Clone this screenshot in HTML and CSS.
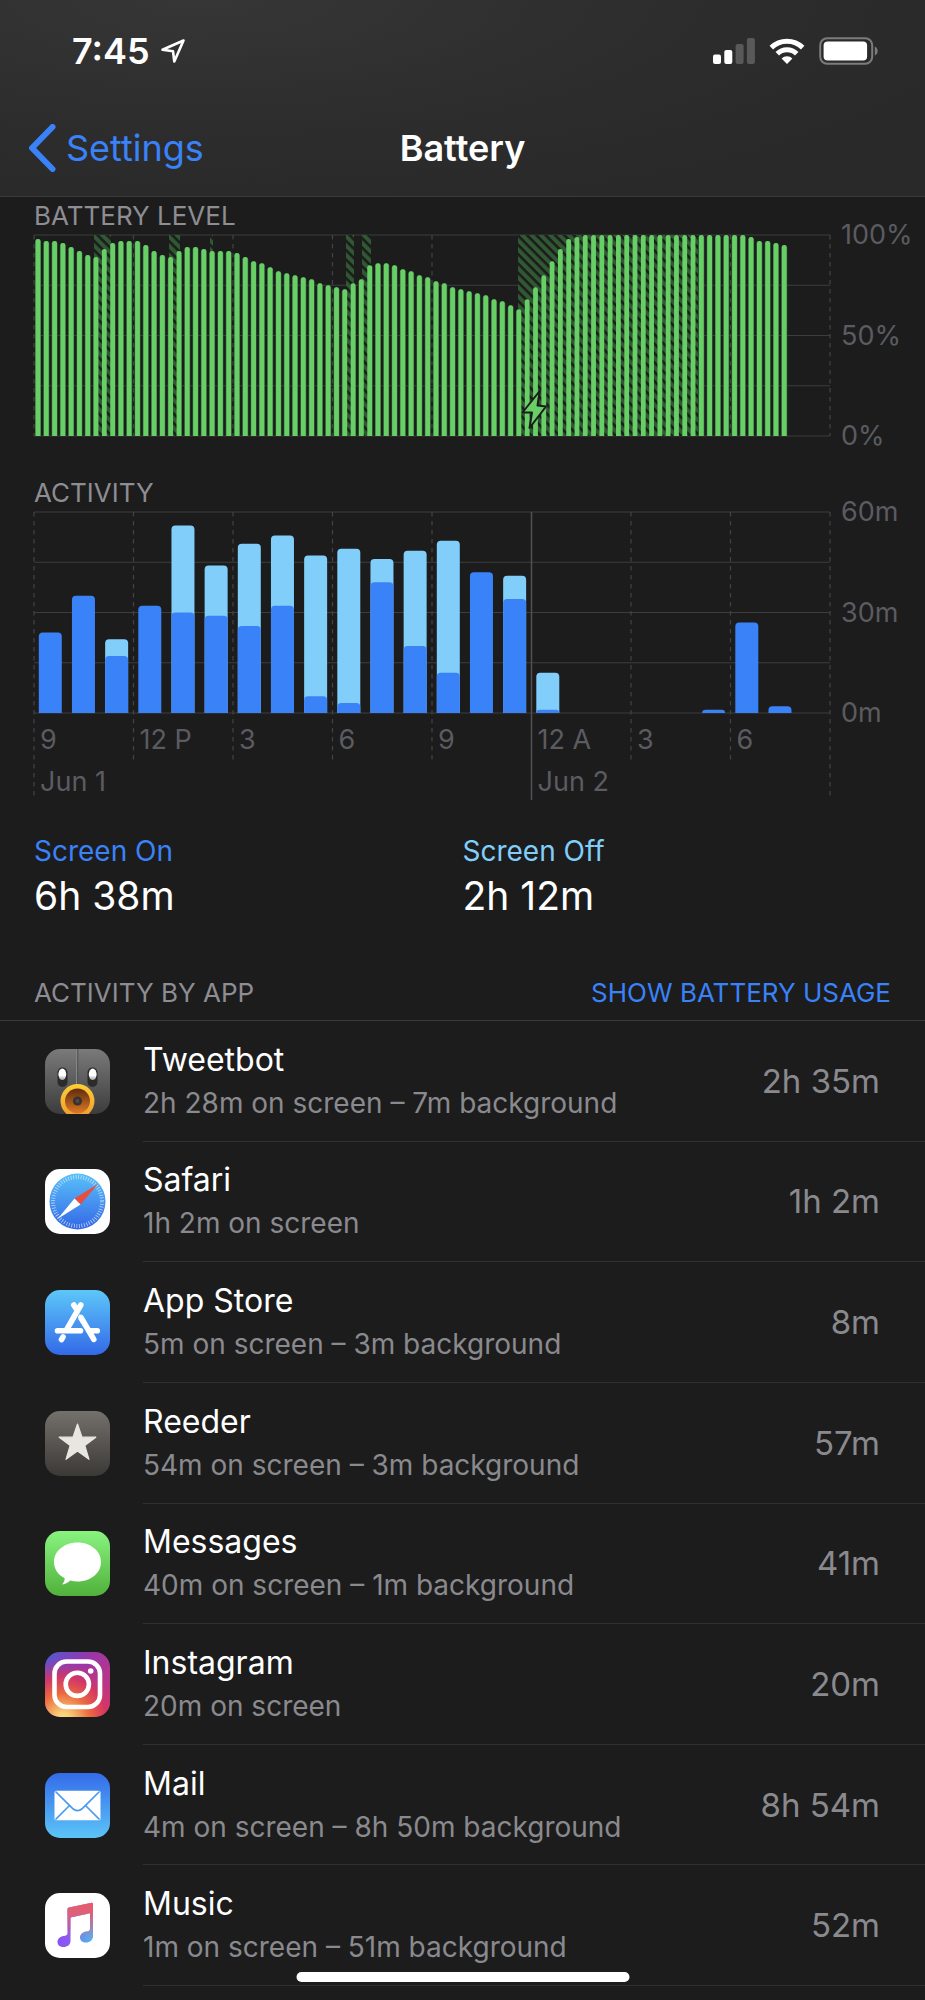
FILE: index.html
```html
<!DOCTYPE html>
<html lang="en">
<head>
<meta charset="utf-8">
<meta name="viewport" content="width=device-width, initial-scale=1">
<title>Battery</title>
<link rel="stylesheet" href="styles.css">
</head>
<body>
<header class="top">
  <div class="status">
    <div class="status-left">
      <span class="clock">7:45</span>
      <svg class="loc" viewBox="0 0 26 26" aria-hidden="true"><path d="M23.500 2.500 2.500 11.800 13 13.200 14.300 23.500Z" fill="none" stroke="#fff" stroke-width="2.600" stroke-linejoin="round"/></svg>
    </div>
    <div class="status-right">
      <svg class="signal" viewBox="0 0 42 26" aria-hidden="true">
        <rect x="0" y="16.500" width="8" height="9.500" rx="2" fill="#fff"/>
        <rect x="11.300" y="12" width="8" height="14" rx="2" fill="#fff"/>
        <rect x="22.600" y="6" width="8" height="20" rx="2" fill="#59595a"/>
        <rect x="33.900" y="0" width="8" height="26" rx="2" fill="#59595a"/>
      </svg>
      <svg class="wifi" viewBox="0 0 36 26" aria-hidden="true">
        <g fill="none" stroke="#fff" stroke-width="5">
          <path d="M2.300 9.600A22.500 22.500 0 0 1 33.700 9.600"/>
          <path d="M8.300 15.700A13.700 13.700 0 0 1 27.700 15.700"/>
        </g>
        <path d="M18 26 12.600 20.400A7.600 7.600 0 0 1 23.400 20.400Z" fill="#fff"/>
      </svg>
      <svg class="cell" viewBox="0 0 59 28" aria-hidden="true">
        <rect x="1.200" y="1.200" width="52" height="25.600" rx="7" fill="none" stroke="#7c7c7d" stroke-width="2"/>
        <rect x="4.600" y="4.600" width="43.500" height="18.800" rx="4" fill="#fff"/>
        <path d="M55.800 9.500C59.600 11 59.600 17 55.800 18.500Z" fill="#7c7c7d"/>
      </svg>
    </div>
  </div>
  <nav class="nav">
    <a class="back" href="#settings">
      <svg class="chevron" viewBox="0 0 28 48" aria-hidden="true"><path d="M24.500 3 4 24 24.500 45" fill="none" stroke="#3a82f7" stroke-width="6" stroke-linecap="round" stroke-linejoin="round"/></svg>
      <span>Settings</span>
    </a>
    <h1 class="title">Battery</h1>
  </nav>
</header>

<main class="page">
  <section class="chart">
    <h2 class="caption">BATTERY LEVEL</h2>
    <div class="plot">
      <svg class="graph" id="level" viewBox="0 0 796 201" role="img" aria-label="Battery level"></svg>
      <div class="scale"><span>100%</span><span>50%</span><span>0%</span></div>
    </div>
  </section>

  <section class="chart activity">
    <h2 class="caption">ACTIVITY</h2>
    <div class="plot">
      <svg class="graph" id="activity" viewBox="0 0 796 201" role="img" aria-label="Activity"></svg>
      <div class="scale"><span>60m</span><span>30m</span><span>0m</span></div>
      <div class="hours"><span>9</span><span>12 P</span><span>3</span><span>6</span><span>9</span><span>12 A</span><span>3</span><span>6</span></div>
      <div class="days"><span class="day-one">Jun 1</span><span class="day-two">Jun 2</span></div>
    </div>
  </section>

  <dl class="totals">
    <div><dt class="on">Screen On</dt><dd>6h 38m</dd></div>
    <div><dt class="off">Screen Off</dt><dd>2h 12m</dd></div>
  </dl>

  <div class="list-head">
    <h2 class="caption">ACTIVITY BY APP</h2>
    <button class="toggle" type="button">SHOW BATTERY USAGE</button>
  </div>

  <ul class="apps">
    <li class="app">
      <svg class="icon" viewBox="0 0 65 65" aria-hidden="true">
        <defs>
          <linearGradient id="tb" x2="0" y2="1"><stop stop-color="#7a7a7b"/><stop offset="1" stop-color="#3c3c3d"/></linearGradient>
          <linearGradient id="tr" x2="0" y2="1"><stop stop-color="#fbd034"/><stop offset="1" stop-color="#f09a30"/></linearGradient>
          <linearGradient id="tm" x2="0" y2="1"><stop stop-color="#5f2b0c"/><stop offset="1" stop-color="#e07a26"/></linearGradient>
          <linearGradient id="te" x2="0" y2="1"><stop offset="0.600" stop-color="#fff"/><stop offset="1" stop-color="#9a9a9b"/></linearGradient>
          <clipPath id="tc"><rect width="65" height="65" rx="15"/></clipPath>
        </defs>
        <g clip-path="url(#tc)">
          <rect width="65" height="65" fill="url(#tb)"/>
          <path d="M31.500 0V36" stroke="#858586" stroke-width="1"/><path d="M32.800 0V36" stroke="#525253" stroke-width="1"/>
          <rect x="12.500" y="18.500" width="10" height="19.500" rx="5" fill="#2b2b2c"/><rect x="42.500" y="18.500" width="10" height="19.500" rx="5" fill="#2b2b2c"/>
          <ellipse cx="17.300" cy="25.300" rx="3.900" ry="5.800" fill="url(#te)"/><ellipse cx="47.700" cy="25.300" rx="3.900" ry="5.800" fill="url(#te)"/>
          <circle cx="32.500" cy="52" r="17" fill="url(#tr)"/><circle cx="32.500" cy="52" r="12.500" fill="url(#tm)"/>
          <circle cx="32.500" cy="52" r="4.600" fill="#39322f"/><circle cx="32.500" cy="52" r="2" fill="#504b49"/>
        </g>
      </svg>
      <div class="body"><div class="text"><span class="name">Tweetbot</span><span class="detail">2h 28m on screen – 7m background</span></div><span class="time">2h 35m</span></div>
    </li>
    <li class="app">
      <svg class="icon" viewBox="0 0 65 65" aria-hidden="true">
        <defs><linearGradient id="sf" x2="0" y2="1"><stop stop-color="#59c1f9"/><stop offset="1" stop-color="#3467e6"/></linearGradient></defs>
        <rect width="65" height="65" rx="15" fill="#fff"/>
        <circle cx="32.500" cy="32.500" r="28" fill="url(#sf)"/>
        <circle cx="32.500" cy="32.500" r="24.500" fill="none" stroke="#d8ecfc" stroke-width="4" stroke-dasharray="0.800 1.766" opacity="0.800"/>
        <path d="M53 15 29.500 29.500 35.500 35.500Z" fill="#ea4d3d"/><path d="M12.500 50 29.500 29.500 35.500 35.500Z" fill="#fff"/>
      </svg>
      <div class="body"><div class="text"><span class="name">Safari</span><span class="detail">1h 2m on screen</span></div><span class="time">1h 2m</span></div>
    </li>
    <li class="app">
      <svg class="icon" viewBox="0 0 65 65" aria-hidden="true">
        <defs><linearGradient id="as" x2="0" y2="1"><stop stop-color="#5dc7f9"/><stop offset="1" stop-color="#3369e8"/></linearGradient></defs>
        <rect width="65" height="65" rx="15" fill="url(#as)"/>
        <g stroke="#fff" stroke-width="5.600" stroke-linecap="round" fill="none">
          <path d="M35.800 15 21.500 40M28.800 15 31 18.500M36 27.500 48.800 49.300M12.500 40.700H35.500M46 40.700H52.300M18 47 16.500 49.500"/>
        </g>
        <path d="M34.600 23.500 39.500 38 33.600 29.500Z" fill="#fff"/>
      </svg>
      <div class="body"><div class="text"><span class="name">App Store</span><span class="detail">5m on screen – 3m background</span></div><span class="time">8m</span></div>
    </li>
    <li class="app">
      <svg class="icon" viewBox="0 0 65 65" aria-hidden="true">
        <defs><linearGradient id="rd" x2="0" y2="1"><stop stop-color="#74706c"/><stop offset="1" stop-color="#3b3936"/></linearGradient></defs>
        <rect width="65" height="65" rx="15" fill="url(#rd)"/>
        <path d="M32.500 13 37 26.200H50.800L39.800 34.500 44 48.300 32.500 40 21 48.300 25.200 34.500 14.200 26.200H28Z" fill="#e8e6e1" stroke="#e8e6e1" stroke-width="1.200" stroke-linejoin="round"/>
      </svg>
      <div class="body"><div class="text"><span class="name">Reeder</span><span class="detail">54m on screen – 3m background</span></div><span class="time">57m</span></div>
    </li>
    <li class="app">
      <svg class="icon" viewBox="0 0 65 65" aria-hidden="true">
        <defs><linearGradient id="ms" x2="0" y2="1"><stop stop-color="#89f37f"/><stop offset="1" stop-color="#50b13c"/></linearGradient></defs>
        <rect width="65" height="65" rx="15" fill="url(#ms)"/>
        <path d="M32.500 11.500C45.800 11.500 56 20 56 31S45.800 50.500 32.500 50.500C30 50.500 27.500 50.200 25.200 49.600 23.500 51.500 20.500 53.200 17 53.500 18.800 51.800 19.800 49.500 19.700 47.300 13 43.800 9 37.800 9 31 9 20 19.200 11.500 32.500 11.500Z" fill="#fff"/>
      </svg>
      <div class="body"><div class="text"><span class="name">Messages</span><span class="detail">40m on screen – 1m background</span></div><span class="time">41m</span></div>
    </li>
    <li class="app">
      <svg class="icon" viewBox="0 0 65 65" aria-hidden="true">
        <defs>
          <linearGradient id="ig" x1="0" y1="0" x2="1" y2="0.600"><stop stop-color="#4f5bd5"/><stop offset="0.500" stop-color="#9437ae"/><stop offset="1" stop-color="#c0357f"/></linearGradient>
          <radialGradient id="ih" cx="0.280" cy="1.050" r="0.980"><stop stop-color="#fbe08a"/><stop offset="0.120" stop-color="#f8cf76"/><stop offset="0.420" stop-color="#ec6a41"/><stop offset="0.680" stop-color="#d8365f" stop-opacity="0.900"/><stop offset="1" stop-color="#b0359a" stop-opacity="0"/></radialGradient>
        </defs>
        <rect width="65" height="65" rx="15" fill="url(#ig)"/><rect width="65" height="65" rx="15" fill="url(#ih)"/>
        <rect x="9.500" y="9.500" width="45.500" height="45.500" rx="12" fill="none" stroke="#fff" stroke-width="4.600"/>
        <circle cx="32.300" cy="32.300" r="11.600" fill="none" stroke="#fff" stroke-width="4.600"/><circle cx="45.700" cy="19" r="2.800" fill="#fff"/>
      </svg>
      <div class="body"><div class="text"><span class="name">Instagram</span><span class="detail">20m on screen</span></div><span class="time">20m</span></div>
    </li>
    <li class="app">
      <svg class="icon" viewBox="0 0 65 65" aria-hidden="true">
        <defs><linearGradient id="ml" x2="0" y2="1"><stop stop-color="#346be9"/><stop offset="1" stop-color="#5cc5f8"/></linearGradient></defs>
        <rect width="65" height="65" rx="15" fill="url(#ml)"/>
        <rect x="9.500" y="17.800" width="46" height="29.500" rx="1.500" fill="#fff"/>
        <path d="M10.500 18.500 27.500 35.300Q32.500 40 37.500 35.300L54.500 18.500M10.500 46.500 24.500 32.500M54.500 46.500 40.500 32.500" fill="none" stroke="#4a99f0" stroke-width="1.700"/>
      </svg>
      <div class="body"><div class="text"><span class="name">Mail</span><span class="detail">4m on screen – 8h 50m background</span></div><span class="time">8h 54m</span></div>
    </li>
    <li class="app">
      <svg class="icon" viewBox="0 0 65 65" aria-hidden="true">
        <defs>
          <linearGradient id="mu" gradientUnits="userSpaceOnUse" x1="13" y1="0" x2="48" y2="0"><stop stop-color="#8a52f6"/><stop offset="0.350" stop-color="#8a5df0"/><stop offset="0.700" stop-color="#5f9bea"/><stop offset="1" stop-color="#5bb0ee"/></linearGradient>
          <linearGradient id="mt" gradientUnits="userSpaceOnUse" x1="0" y1="10" x2="0" y2="46"><stop stop-color="#ea5a68"/><stop offset="0.350" stop-color="#d9617f"/><stop offset="1" stop-color="#d9617f" stop-opacity="0"/></linearGradient>
          <path id="note" d="M24 14.500 46.500 9.700Q48 9.500 48 11V43C48 47 45 49.500 41 49.500 37.500 49.500 35 47.500 35 44.500 35 41 38 39 41 38.500 44 38.200 45 37.500 45 35.500V20.300L25.500 24.400V48C25.500 51.800 22.500 54 18.500 54 15 54 12.500 52 12.500 49 12.500 45.600 15.200 43.500 18.500 43 21.500 42.600 22.500 42 22.500 40V16Q22.500 14.800 24 14.500Z"/>
        </defs>
        <rect width="65" height="65" rx="15" fill="#fff"/>
        <use href="#note" fill="url(#mu)"/><use href="#note" fill="url(#mt)"/>
      </svg>
      <div class="body"><div class="text"><span class="name">Music</span><span class="detail">1m on screen – 51m background</span></div><span class="time">52m</span></div>
    </li>
  </ul>
</main>
<div class="home-bar"></div>
<script src="charts.js"></script>
</body>
</html>
```
FILE: styles.css
```css
* { box-sizing: border-box; }

html { background: #1c1c1d; }

body {
  margin: 0;
  min-height: 100vh;
  display: flex;
  flex-direction: column;
  background: #1c1c1d;
  color: #fff;
  font-family: Inter, "Liberation Sans", sans-serif;
}

h1, h2, dl, dd, ul { margin: 0; padding: 0; font-weight: 400; }

.top {
  padding-bottom: 9px;
  border-bottom: 1px solid #3a3a3c;
  background: radial-gradient(ellipse at 22% 0, #363637, #2d2d2e 45%, transparent 80%), #29292a;
}

.status {
  display: flex;
  justify-content: space-between;
  align-items: center;
  height: 101px;
  padding: 0 47px 0 72px;
}

.status-left { display: flex; align-items: center; gap: 10px; }
.clock { font-size: 36px; font-weight: 600; line-height: 40px; }
.loc { width: 26px; height: 26px; }
.status-right { display: flex; align-items: center; gap: 14px; }
.signal { width: 42px; height: 26px; }
.wifi { width: 36px; height: 26px; }
.cell { width: 59px; height: 28px; }

.nav {
  display: grid;
  grid-template-columns: 1fr auto 1fr;
  align-items: center;
  height: 86px;
  padding: 8px 28px 0;
}

.back {
  display: flex;
  align-items: center;
  gap: 10px;
  color: #3a82f7;
  font-size: 36px;
  line-height: 48px;
  text-decoration: none;
}

.chevron { width: 28px; height: 48px; }
.title { font-size: 36px; font-weight: 600; line-height: 48px; }

.page { flex: 1; display: flex; flex-direction: column; padding-bottom: 14px; }

.chart { padding-left: 34px; }
.activity { margin-top: 38px; }

.caption { color: #8d8d92; font-size: 26px; line-height: 38px; }

.plot { display: grid; grid-template-columns: 1fr 95px; }
.graph { display: block; width: 100%; height: auto; overflow: visible; }

.scale {
  display: flex;
  flex-direction: column;
  justify-content: space-between;
  margin: -16px 0;
  padding-left: 11px;
  color: #5b5b60;
  font-size: 27px;
  line-height: 32px;
}

.hours, .days {
  grid-column: 1;
  display: grid;
  grid-template-columns: repeat(8, 1fr);
  color: #5b5b60;
  font-size: 27px;
}

.hours span, .days span { padding-left: 6px; white-space: nowrap; }
.hours { line-height: 54px; }
.days { line-height: 30px; }
.day-one { grid-column: 1 / 6; }
.day-two { grid-column: 6 / 9; }

.totals {
  display: grid;
  grid-template-columns: 1fr 1fr;
  padding-top: 37px;
}

.totals div { padding-left: 34px; }
.totals div + div { padding-left: 0; }
.totals dt { font-size: 28px; line-height: 34px; }
.totals dd { font-size: 39px; line-height: 56px; }
.on { color: #3a82f7; }
.off { color: #81cefa; }

.list-head {
  display: flex;
  justify-content: space-between;
  align-items: center;
  padding: 50px 34px 8px;
  border-bottom: 1px solid #39393b;
}

.toggle {
  padding: 0;
  border: 0;
  background: none;
  color: #3a82f7;
  font: inherit;
  font-size: 26px;
  line-height: 38px;
}

.apps { flex: 1; display: flex; flex-direction: column; list-style: none; }

.app { flex: 1; display: flex; align-items: stretch; gap: 33px; padding-left: 45px; }
.icon { width: 65px; height: 65px; align-self: center; }

.body {
  flex: 1;
  display: flex;
  justify-content: space-between;
  align-items: center;
  gap: 20px;
  padding-right: 45px;
  border-bottom: 1px solid #303032;
}

.text { display: flex; flex-direction: column; }
.name { font-size: 32px; line-height: 44px; }
.detail { color: #8a8a8e; font-size: 28px; line-height: 42px; }
.time { color: #8a8a8e; font-size: 33px; white-space: nowrap; }

.home-bar {
  position: fixed;
  bottom: 18px;
  left: 50%;
  width: 36%;
  height: 10px;
  border-radius: 5px;
  background: #fff;
  transform: translateX(-50%);
}
```
FILE: charts.js
```js
const W = 796;
const H = 201;

const level = [
  98, 97, 97, 96, 94, 92, 90, 89, 93, 96, 97, 97, 97, 95, 92, 90, 89, 92, 94, 94, 93, 92, 92, 92,
  91, 89, 87, 86, 84, 82, 81, 80, 79, 78, 76, 75, 74, 73, 76, 78, 85, 86, 86, 85, 83, 82, 80, 79,
  77, 76, 74, 73, 72, 71, 70, 68, 67, 65, 63, 68, 74, 80, 87, 93, 98, 99, 100, 100, 100, 100, 100, 100,
  100, 100, 100, 100, 100, 100, 100, 100, 100, 100, 100, 100, 100, 100, 99, 97, 97, 96, 95
];

// Charging spans: start and end in plot units.
const charging = [[60, 77], [135, 146], [176, 179], [312, 320], [328, 337], [484, 664]];

// Minutes per hour: [total, screen on].
const hours = [
  [24, 24], [35, 35], [22, 17], [32, 32], [56, 30], [44, 29], [50.5, 26], [53, 32],
  [47, 5], [49, 3], [46, 39], [48.4, 20], [51.4, 12], [42, 42], [41, 34], [12, 1],
  [0, 0], [0, 0], [0, 0], [0, 0], [1, 1], [27, 27], [2, 2], [0, 0]
];

function bar(x, value, max, width, radius, fill) {
  if (!value) return '';
  const h = value / max * H;
  const r = Math.min(radius, h);
  return `<path d="M${x} ${H}v${-(h - r)}q0 ${-r} ${r} ${-r}h${width - 2 * r}q${r} 0 ${r} ${r}v${h - r}z" fill="${fill}"/>`;
}

function gridLines() {
  let out = '';
  for (let i = 0; i <= 4; i++) {
    const y = i * H / 4;
    out += `<path d="M0 ${y}H${W}" stroke="#3d3d3f" stroke-width="1.2"/>`;
  }
  return out;
}

function verticals(inner, outer) {
  let out = '';
  for (let i = 0; i <= 8; i++) {
    const x = i * W / 8;
    const end = i % 8 === 0 || i === 5 ? outer : inner;
    out += i === 5
      ? `<path d="M${x} 0V${end}" stroke="#505053" stroke-width="1.5"/>`
      : `<path d="M${x} 0V${end}" stroke="#434345" stroke-width="1.2" stroke-dasharray="4.5 4.5"/>`;
  }
  return out;
}

let out = `<defs><pattern id="hatch" width="6.6" height="6.6" patternUnits="userSpaceOnUse" patternTransform="rotate(45)">
<rect width="6.6" height="6.6" fill="#305832"/><rect width="6.6" height="2.6" fill="#1c1c1d"/></pattern></defs>`;
out += gridLines() + verticals(H, H);
const center = i => 4 + i * W / 96;
level.forEach((v, i) => {
  out += bar(center(i) - 3, v, 100, 6, 3, '#34643a');
});
charging.forEach(([a, b]) => {
  out += `<rect x="${a}" y="0" width="${b - a}" height="${H}" fill="url(#hatch)"/>`;
});
level.forEach((v, i) => {
  out += bar(center(i) - 2.4, v, 100, 4.8, 2.2, '#68cf67');
});
out += '<path d="M505.700 156 488.500 177.500H498L495.500 193 512 171.500 503.500 170.500Z" fill="#68cf67" stroke="#1c1c1d" stroke-width="2" stroke-linejoin="round"/>';
document.getElementById('level').innerHTML = out;

out = gridLines() + verticals(251, 288);
hours.forEach(([total, on], i) => {
  const x = 4.8 + i * W / 24;
  if (total > on) out += bar(x, total, 60, 23, 4, '#81cefa');
  out += bar(x, on, 60, 23, 4, '#3a82f7');
});
document.getElementById('activity').innerHTML = out;
```
